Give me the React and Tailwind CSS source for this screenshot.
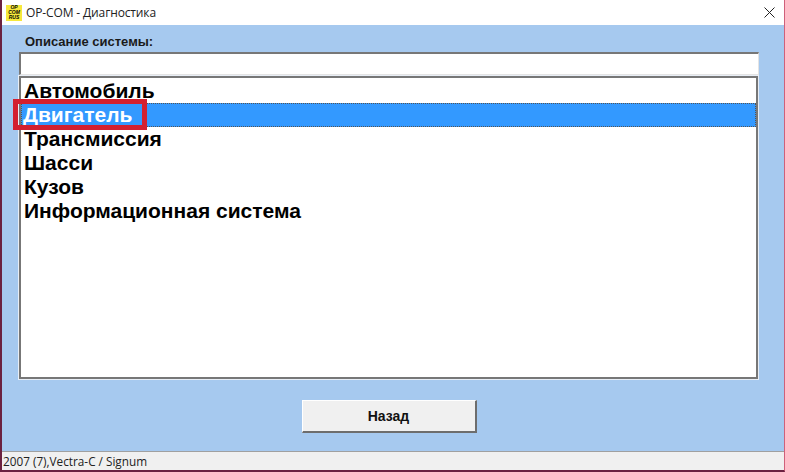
import React from "react";

const items = ["Автомобиль", "Двигатель", "Трансмиссия", "Шасси", "Кузов", "Информационная система"];

const Logo = () => (
  <div className="w-[16px] h-[16px] bg-[#f7e83c] flex flex-col items-center justify-center font-['Liberation_Sans',sans-serif] font-bold italic text-[5px] leading-[5px] text-black">
    <span>OP</span>
    <span>COM</span>
    <span>RUS</span>
  </div>
);

export default function App() {
  return (
    <div className="w-[785px] h-[472px] flex flex-col bg-white border-l-2 border-l-[#6b2140] border-r border-r-[#d0607a] border-b-2 border-b-[#6b2140] font-['Liberation_Sans',sans-serif] text-black overflow-hidden">
      {/* Title bar */}
      <div className="h-[25px] shrink-0 bg-white flex items-center pl-[4px] pr-[6px]">
        <Logo />
        <span className="ml-[4px] font-['Open_Sans',sans-serif] text-[12px] tracking-[-0.13px] text-[#222]">OP-COM - Диагностика</span>
        <svg className="ml-auto mr-[3px]" width="11" height="11" viewBox="0 0 11 11" fill="none" stroke="#222" strokeWidth="1">
          <path d="M0.5 0.5L10.5 10.5M10.5 0.5L0.5 10.5" />
        </svg>
      </div>

      {/* Client area */}
      <div className="flex-1 bg-[#a6c9ef] flex flex-col pl-[17px] pr-[25px] min-h-0">
        <div className="h-[27px] shrink-0 flex items-end pb-[3px] pl-[6px] text-[13px] leading-[15px] font-bold text-[#1a1a1a]">
          Описание системы:
        </div>
        <div className="h-[23px] shrink-0 bg-white border-t-2 border-l-2 border-t-[#777] border-l-[#777] border-r border-b border-r-[#e4e4e4] border-b-[#e4e4e4]" />
        <div className="mt-[1px] h-[303px] shrink-0 bg-white border-2 border-[#777] outline outline-1 outline-[#e8eef6] mr-[1px] pt-[1px]">
          {items.map((item, i) => (
            <div
              key={item}
              className={`h-[24px] text-[21px] font-bold ${i === 1 ? "bg-[#3399ff] text-white border border-dotted border-[#555] pl-[1px] leading-[22px]" : "pl-[3px] leading-[24px] text-black"}`}
            >
              {item}
            </div>
          ))}
        </div>
        <div className="flex-1 flex justify-center items-start pt-[21px]">
          <button className="w-[175px] h-[33px] bg-[#f0f0f0] border-t border-l border-t-white border-l-white border-r-2 border-b-2 border-r-[#6d6d6d] border-b-[#6d6d6d] text-[14px] font-bold text-[#111]">
            Назад
          </button>
        </div>
      </div>

      {/* Status bar */}
      <div className="h-[19px] shrink-0 bg-[#f0f0f0] border-t border-t-[#a0a0a0] flex items-center pl-[1px] pt-[1px] font-['Open_Sans',sans-serif] text-[11.75px] text-[#222]">
        2007 (7),Vectra-C / Signum
      </div>

      {/* Annotation over the selected row */}
      <div className="absolute left-[13px] top-[99px] w-[134px] h-[31px] border-[5px] border-[#d3202f]" />
    </div>
  );
}
